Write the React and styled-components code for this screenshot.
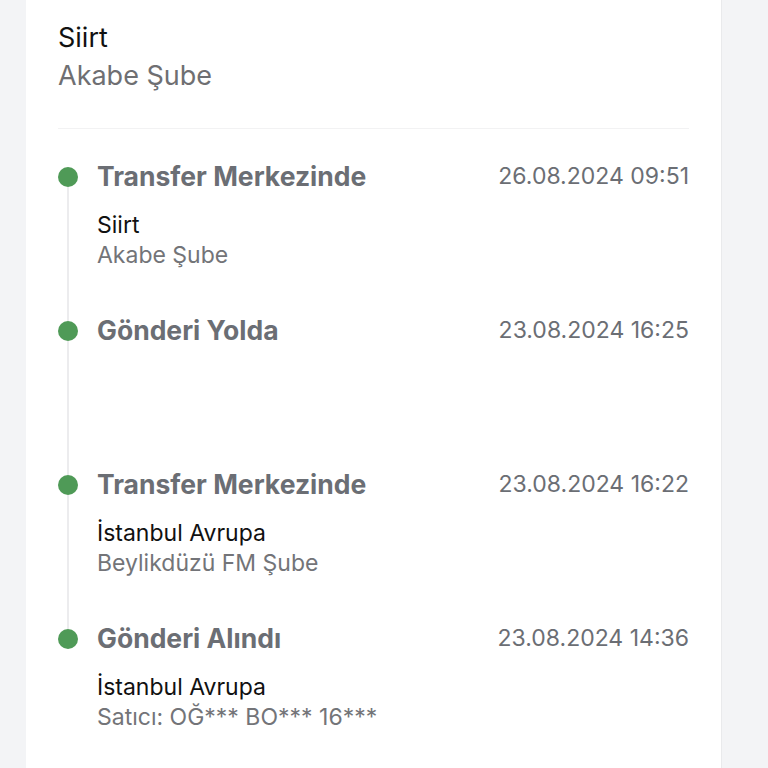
import React from "react";
import styled, { createGlobalStyle } from "styled-components";

const Global = createGlobalStyle`
  html, body { margin: 0; padding: 0; background: #f3f4f6; }
  body { font-family: "Inter", "Liberation Sans", sans-serif; }
`;

const Page = styled.div`
  display: flex;
  padding-left: 26px;
  min-height: 768px;
`;

const Card = styled.div`
  width: 696px;
  background: #ffffff;
  box-sizing: border-box;
  padding: 19px 32px 40px 32px;
  border-right: 1px solid #e9eaec;
`;

const Header = styled.div`
  display: flex;
  flex-direction: column;
  padding-bottom: 33px;
  border-bottom: 1px solid #f2f2f3;
`;

const City = styled.div`
  font-size: 27px;
  line-height: 38px;
  color: #111111;
`;

const Branch = styled.div`
  font-size: 27px;
  line-height: 38px;
  color: #6f6f72;
`;

const Timeline = styled.div`
  display: flex;
  flex-direction: column;
  padding-top: 31px;
`;

const Item = styled.div`
  display: grid;
  grid-template-columns: 20px 1fr;
  column-gap: 19px;
`;

const Rail = styled.div`
  display: flex;
  flex-direction: column;
  align-items: center;
  padding-top: 7px;
`;

const Dot = styled.div`
  width: 20px;
  height: 20px;
  border-radius: 50%;
  background: #4f9a57;
  flex: none;
`;

const Line = styled.div`
  width: 2px;
  flex: 1;
  background: ${(p) => (p.$hidden ? "transparent" : "#ececee")};
  margin-bottom: -7px;
`;

const Body = styled.div`
  display: flex;
  flex-direction: column;
  padding-bottom: 44px;
`;

const TitleRow = styled.div`
  display: flex;
  justify-content: space-between;
  align-items: center;
  height: 32px;
`;

const Title = styled.div`
  font-size: 26.5px;
  font-weight: 700;
  color: #6b6e74;
`;

const Date = styled.div`
  font-size: 23px;
  color: #6b6e74;
`;

const Sub = styled.div`
  margin-top: 18px;
  min-height: 60px;
  display: flex;
  flex-direction: column;
`;

const SubPrimary = styled.div`
  font-size: 23px;
  line-height: 30px;
  color: #111111;
`;

const SubSecondary = styled.div`
  font-size: 23px;
  line-height: 30px;
  color: #737478;
`;

const events = [
  { title: "Transfer Merkezinde", date: "26.08.2024 09:51", a: "Siirt", b: "Akabe Şube" },
  { title: "Gönderi Yolda", date: "23.08.2024 16:25", a: "", b: "" },
  { title: "Transfer Merkezinde", date: "23.08.2024 16:22", a: "İstanbul Avrupa", b: "Beylikdüzü FM Şube" },
  { title: "Gönderi Alındı", date: "23.08.2024 14:36", a: "İstanbul Avrupa", b: "Satıcı: OĞ*** BO*** 16***" },
];

export default function App() {
  return (
    <>
      <Global />
      <Page>
        <Card>
          <Header>
            <City>Siirt</City>
            <Branch>Akabe Şube</Branch>
          </Header>
          <Timeline>
            {events.map((e, i) => (
              <Item key={i}>
                <Rail>
                  <Dot />
                  <Line $hidden={i === events.length - 1} />
                </Rail>
                <Body>
                  <TitleRow>
                    <Title>{e.title}</Title>
                    <Date>{e.date}</Date>
                  </TitleRow>
                  <Sub>
                    {e.a && <SubPrimary>{e.a}</SubPrimary>}
                    {e.b && <SubSecondary>{e.b}</SubSecondary>}
                  </Sub>
                </Body>
              </Item>
            ))}
          </Timeline>
        </Card>
      </Page>
    </>
  );
}
